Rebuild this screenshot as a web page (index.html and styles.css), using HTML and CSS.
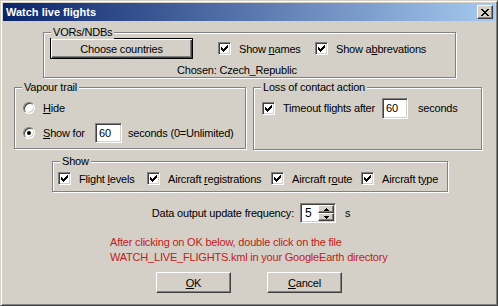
FILE: index.html
```html
<!DOCTYPE html>
<html lang="en">
<head>
    <meta charset="UTF-8">
    <meta name="viewport" content="width=device-width, initial-scale=1.0">
    <link rel="stylesheet" href="styles.css">
</head>
<body>
    <div class="window">
        <div class="titlebar">
            <span class="title">Watch live flights</span>
            <span class="close-btn">
                <svg width="8" height="7" viewBox="0 0 8 7" shape-rendering="crispEdges"><path d="M0 0h2v1h-2zM6 0h2v1h-2zM1 1h2v1h-2zM5 1h2v1h-2zM2 2h4v1h-4zM3 3h2v1h-2zM2 4h4v1h-4zM1 5h2v1h-2zM5 5h2v1h-2zM0 6h2v1h-2zM6 6h2v1h-2z"/></svg>
            </span>
        </div>

        <div class="client">
            <!-- VORs / NDBs -->
            <div class="group vors">
                <span class="caption">VORs/NDBs</span>
                <div class="row">
                    <span class="button default choose">Choose countries</span>
                    <span class="check names">
                        <span class="box"><svg width="7" height="7" viewBox="0 0 7 7" shape-rendering="crispEdges"><path d="M0 2h1v1h1v1h1v-1h1v-1h1v-1h1v-1h1v3h-1v1h-1v1h-1v1h-1v1h-1v-1h-1v-1h-1z"/></svg></span>
                        <span>Show <u>n</u>ames</span>
                    </span>
                    <span class="check">
                        <span class="box"><svg width="7" height="7" viewBox="0 0 7 7" shape-rendering="crispEdges"><path d="M0 2h1v1h1v1h1v-1h1v-1h1v-1h1v-1h1v3h-1v1h-1v1h-1v1h-1v1h-1v-1h-1v-1h-1z"/></svg></span>
                        <span>Show a<u>b</u>brevations</span>
                    </span>
                </div>
                <div class="chosen">Chosen: Czech_Republic</div>
            </div>

            <div class="pair">
                <!-- Vapour trail -->
                <div class="group vapour">
                    <span class="caption">Vapour trail</span>
                    <div class="radio-row">
                        <span class="radio"></span>
                        <span><u>H</u>ide</span>
                    </div>
                    <div class="radio-row">
                        <span class="radio on"></span>
                        <span class="show-for"><u>S</u>how for</span>
                        <span class="edit trail">60</span>
                        <span>seconds (0=Unlimited)</span>
                    </div>
                </div>

                <!-- Loss of contact -->
                <div class="group loss">
                    <span class="caption">Loss of contact action</span>
                    <div class="radio-row">
                        <span class="check timeout">
                            <span class="box"><svg width="7" height="7" viewBox="0 0 7 7" shape-rendering="crispEdges"><path d="M0 2h1v1h1v1h1v-1h1v-1h1v-1h1v-1h1v3h-1v1h-1v1h-1v1h-1v1h-1v-1h-1v-1h-1z"/></svg></span>
                            <span>Timeout flights after</span>
                        </span>
                        <span class="edit timeout-edit">60</span>
                        <span class="unit">seconds</span>
                    </div>
                </div>
            </div>

            <!-- Show -->
            <div class="group show">
                <span class="caption">Show</span>
                <div class="row show-row">
                    <span class="check w89">
                        <span class="box"><svg width="7" height="7" viewBox="0 0 7 7" shape-rendering="crispEdges"><path d="M0 2h1v1h1v1h1v-1h1v-1h1v-1h1v-1h1v3h-1v1h-1v1h-1v1h-1v1h-1v-1h-1v-1h-1z"/></svg></span>
                        <span>Flight <u>l</u>evels</span>
                    </span>
                    <span class="check w124">
                        <span class="box"><svg width="7" height="7" viewBox="0 0 7 7" shape-rendering="crispEdges"><path d="M0 2h1v1h1v1h1v-1h1v-1h1v-1h1v-1h1v3h-1v1h-1v1h-1v1h-1v1h-1v-1h-1v-1h-1z"/></svg></span>
                        <span>Aircraft <u>r</u>egistrations</span>
                    </span>
                    <span class="check w90">
                        <span class="box"><svg width="7" height="7" viewBox="0 0 7 7" shape-rendering="crispEdges"><path d="M0 2h1v1h1v1h1v-1h1v-1h1v-1h1v-1h1v3h-1v1h-1v1h-1v1h-1v1h-1v-1h-1v-1h-1z"/></svg></span>
                        <span>Aircraft r<u>o</u>ute</span>
                    </span>
                    <span class="check">
                        <span class="box"><svg width="7" height="7" viewBox="0 0 7 7" shape-rendering="crispEdges"><path d="M0 2h1v1h1v1h1v-1h1v-1h1v-1h1v-1h1v3h-1v1h-1v1h-1v1h-1v1h-1v-1h-1v-1h-1z"/></svg></span>
                        <span>Aircraft t<u>y</u>pe</span>
                    </span>
                </div>
            </div>

            <!-- update frequency -->
            <div class="freq">
                <span class="freq-label">Data output update frequency:</span>
                <span class="spin">
                    <span class="spin-value">5</span>
                    <span class="arrows">
                        <span class="arrow"><svg width="5" height="3" viewBox="0 0 5 3" shape-rendering="crispEdges"><path d="M2 0h1v1h1v1h1v1h-5v-1h1v-1h1z"/></svg></span>
                        <span class="arrow"><svg width="5" height="3" viewBox="0 0 5 3" shape-rendering="crispEdges"><path d="M0 0h5v1h-1v1h-1v1h-1v-1h-1v-1h-1z"/></svg></span>
                    </span>
                </span>
                <span class="unit-s">s</span>
            </div>

            <div class="notice">
                After clicking on OK below, double click on the file<br>
                WATCH_LIVE_FLIGHTS.kml in your GoogleEarth directory
            </div>

            <div class="actions">
                <span class="button"><span><u>O</u>K</span></span>
                <span class="button"><span><u>C</u>ancel</span></span>
            </div>
        </div>
    </div>
</body>
</html>
```

FILE: styles.css
```css
body {
    margin: 0;
    font-family: "Liberation Sans", Arial, sans-serif;
    font-size: 11px;
    letter-spacing: -0.2px;
    color: #000;
    background-color: #d4d0c8;
}

.window {
    width: 498px;
    height: 306px;
    box-sizing: border-box;
    border: 1px solid;
    border-color: #d4d0c8 #404040 #404040 #d4d0c8;
    box-shadow: inset 1px 1px 0 #fff, inset -1px -1px 0 #808080;
    padding: 2px;
    background-color: #d4d0c8;
}

.titlebar {
    height: 18px;
    display: flex;
    align-items: center;
    justify-content: space-between;
    padding: 0 2px 0 3px;
    background: linear-gradient(to right, #0a246a, #a6caf0);
    color: #fff;
    font-weight: bold;
    letter-spacing: 0;
}

.close-btn {
    width: 16px;
    height: 14px;
    box-sizing: border-box;
    display: flex;
    align-items: center;
    justify-content: center;
    background-color: #d4d0c8;
    border: 1px solid;
    border-color: #fff #404040 #404040 #fff;
    box-shadow: inset -1px -1px 0 #808080;
}

.client {
    display: flex;
    flex-direction: column;
    align-items: flex-start;
    white-space: nowrap;
}

/* etched group box */
.group {
    position: relative;
    box-sizing: border-box;
    border: 1px solid #808080;
    box-shadow: inset 1px 1px 0 #fff, 1px 1px 0 #fff;
}

.caption {
    position: absolute;
    top: -7px;
    left: 7px;
    padding: 0 2px;
    line-height: 13px;
    background-color: #d4d0c8;
}

.row {
    display: flex;
    align-items: center;
}

.button {
    box-sizing: border-box;
    width: 75px;
    height: 21px;
    display: flex;
    align-items: center;
    justify-content: center;
    border: 1px solid;
    border-color: #fff #404040 #404040 #fff;
    box-shadow: inset -1px -1px 0 #808080;
}

.button.default {
    border-color: #000;
    box-shadow: inset 1px 1px 0 #fff, inset -1px -1px 0 #404040, inset -2px -2px 0 #808080;
}

.check {
    display: flex;
    align-items: center;
    gap: 8px;
    flex: none;
}

.box {
    width: 13px;
    height: 13px;
    box-sizing: border-box;
    display: flex;
    align-items: center;
    justify-content: center;
    background-color: #fff;
    border: 1px solid;
    border-color: #808080 #fff #fff #808080;
    box-shadow: inset 1px 1px 0 #404040, inset -1px -1px 0 #d4d0c8;
}

.radio {
    width: 12px;
    height: 12px;
    box-sizing: border-box;
    flex: none;
    display: flex;
    align-items: center;
    justify-content: center;
    border-radius: 50%;
    background-color: #fff;
    border: 1px solid;
    border-color: #808080 #fff #fff #808080;
    box-shadow: inset 1px 1px 0 #404040, inset -1px -1px 0 #d4d0c8;
    margin-right: 8px;
}

.radio.on::after {
    content: "";
    width: 4px;
    height: 4px;
    border-radius: 50%;
    background-color: #000;
}

.edit {
    box-sizing: border-box;
    height: 20px;
    display: flex;
    align-items: center;
    padding-left: 3px;
    background-color: #fff;
    border: 1px solid;
    border-color: #808080 #fff #fff #808080;
    box-shadow: inset 1px 1px 0 #404040, inset -1px -1px 0 #d4d0c8;
}

/* VORs / NDBs */
.vors {
    margin: 11px 0 0 40px;
    width: 413px;
    height: 46px;
    padding: 5px 0 0 6px;
}

.choose { width: 143px; }
.names { margin-left: 25px; width: 97px; }

.chosen {
    margin: 5px 0 0 127px;
    line-height: 13px;
}

/* vapour trail + loss of contact */
.pair {
    display: flex;
    align-items: flex-start;
    gap: 7px;
    margin: 9px 0 0 11px;
}

.vapour {
    width: 232px;
    height: 62px;
    padding: 10px 0 0 8px;
    display: flex;
    flex-direction: column;
    gap: 5px;
}

.radio-row {
    display: flex;
    align-items: center;
    height: 20px;
}

.show-for { width: 52px; }
.trail { width: 27px; margin-right: 6px; }

.loss {
    width: 229px;
    height: 63px;
    padding: 10px 0 0 8px;
}

.timeout { width: 120px; }
.timeout-edit { width: 26px; height: 21px; }
.unit { margin-left: 10px; }

/* show */
.show {
    margin: 11px 0 0 49px;
    width: 396px;
    height: 31px;
    padding: 10px 0 0 5px;
}

.w89 { width: 89px; }
.w124 { width: 124px; }
.w90 { width: 90px; }

/* update frequency */
.freq {
    display: flex;
    align-items: center;
    height: 20px;
    margin: 11px 0 0 146px;
}

.freq-label {
    width: 151px;
    box-sizing: border-box;
    padding-right: 6px;
    display: flex;
    justify-content: flex-end;
}

.spin {
    width: 36px;
    height: 20px;
    box-sizing: border-box;
    display: flex;
    background-color: #fff;
    border: 1px solid;
    border-color: #808080 #fff #fff #808080;
    box-shadow: inset 1px 1px 0 #404040, inset -1px -1px 0 #d4d0c8;
    padding: 1px;
}

.spin-value {
    flex: 1;
    padding-left: 3px;
    line-height: 16px;
    font-size: 12px;
}

.arrows {
    width: 16px;
    display: flex;
    flex-direction: column;
}

.arrow {
    flex: 1;
    box-sizing: border-box;
    display: flex;
    align-items: center;
    justify-content: center;
    background-color: #d4d0c8;
    border: 1px solid;
    border-color: #fff #404040 #404040 #fff;
    box-shadow: inset -1px -1px 0 #808080;
}

.unit-s { margin-left: 9px; }

.notice {
    margin: 12px 0 0 107px;
    line-height: 15px;
    color: #c02020;
}

.actions {
    display: flex;
    gap: 36px;
    margin: 7px 0 0 153px;
}
```
